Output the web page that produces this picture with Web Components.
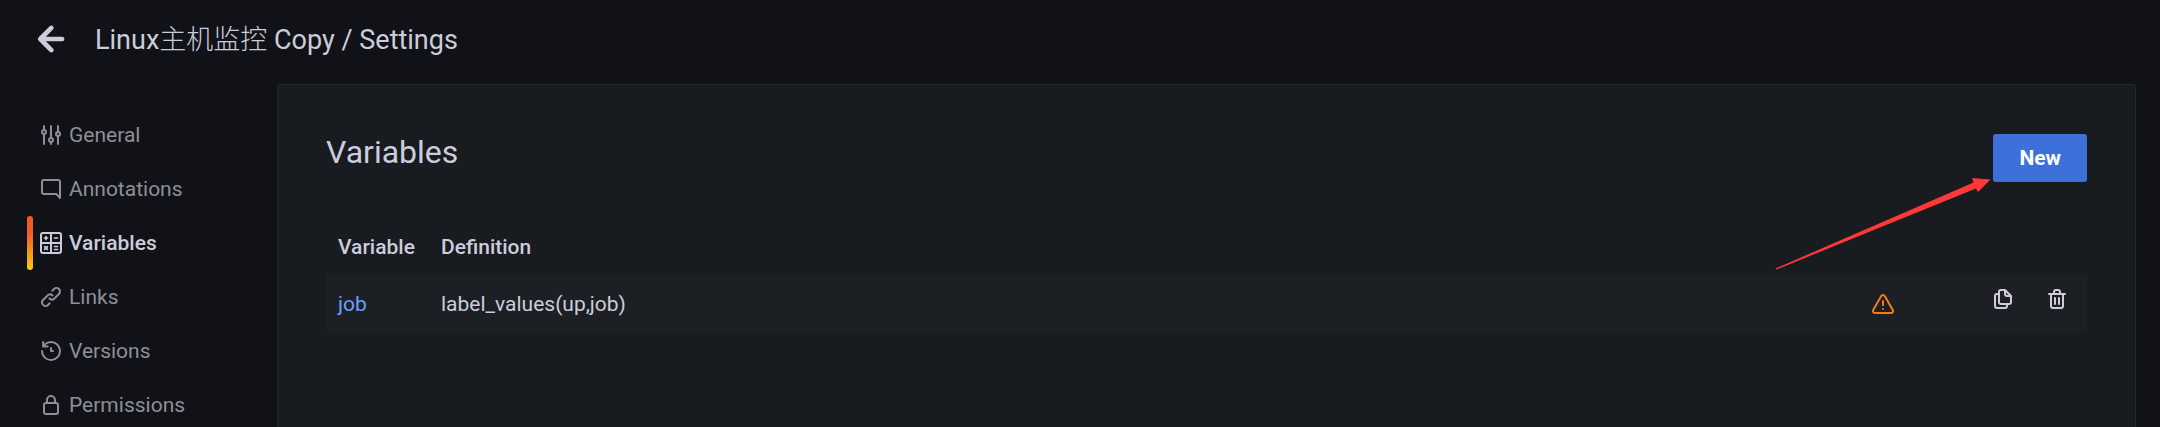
<!DOCTYPE html>
<html lang="en">
<head>
<meta charset="utf-8">
<title>Settings</title>
<style>
  body {
    margin: 0;
    background: #111217;
    color: #ccccdc;
    font-family: Roboto, "Noto Sans CJK SC", sans-serif;
    font-size: 21px;
    line-height: 30px;
  }
</style>
</head>
<body>
<settings-page>
  <page-header slot="header"><span>Linux<span lang="zh" style="font-weight: 300">主机监控</span> Copy / Settings</span></page-header>
  <settings-nav slot="nav">
    <nav-item icon="sliders">General</nav-item>
    <nav-item icon="comment">Annotations</nav-item>
    <nav-item icon="calculator" active>Variables</nav-item>
    <nav-item icon="link">Links</nav-item>
    <nav-item icon="history">Versions</nav-item>
    <nav-item icon="lock">Permissions</nav-item>
  </settings-nav>
  <settings-panel>
    <span slot="title">Variables</span>
    <new-button slot="action">New</new-button>
    <variable-table></variable-table>
    <pointer-arrow slot="pointer"></pointer-arrow>
  </settings-panel>
</settings-page>

<script>
const stroke = 'fill="none" stroke="currentColor" stroke-linecap="round" stroke-linejoin="round"';

const ICONS = {
  back: `<path ${stroke} stroke-width="4" d="M21.500 12H4M12.300 2.500L2.800 12l9.500 9.500"/>`,
  sliders: `<g ${stroke} stroke-width="2"><path d="M5 3v4M5 11v10M12 3v12M12 19v2M19 3v6M19 13v8"/><circle cx="5" cy="9" r="2"/><circle cx="12" cy="17" r="2"/><circle cx="19" cy="11" r="2"/></g>`,
  comment: `<path ${stroke} stroke-width="2" d="M5 3h14a2 2 0 0 1 2 2v16l-2.800-3.200a2 2 0 0 0-1.400-.8H5a2 2 0 0 1-2-2V5a2 2 0 0 1 2-2z"/>`,
  calculator: `<g ${stroke} stroke-width="2"><rect x="2" y="2" width="20" height="20" rx="2"/><path d="M12 2v20M2 12h20"/><path d="M7 5.500v3M5.500 7h3M15.500 7h3M5.600 15.600l2.800 2.800M8.400 15.600l-2.800 2.800M15.500 15.500h3M15.500 18.500h3" stroke-width="1.700"/></g>`,
  link: `<path d="M10,17.55,8.23,19.27a2.47,2.47,0,0,1-3.5-3.5l4.54-4.55a2.46,2.46,0,0,1,3.39-.09l.12.1a1,1,0,0,0,1.4-1.43A2.75,2.75,0,0,0,14,9.59a4.46,4.46,0,0,0-6.09.22L3.31,14.36a4.48,4.48,0,0,0,6.33,6.33L11.37,19A1,1,0,0,0,10,17.55ZM20.69,3.31a4.49,4.49,0,0,0-6.33,0L12.63,5A1,1,0,0,0,14,6.45l1.73-1.72a2.47,2.47,0,0,1,3.5,3.5l-4.54,4.55a2.46,2.46,0,0,1-3.39.09l-.12-.1a1,1,0,0,0-1.4,1.43,2.75,2.75,0,0,0,.23.21,4.47,4.47,0,0,0,6.09-.22l4.55-4.55A4.49,4.49,0,0,0,20.69,3.31Z"/>`,
  history: `<path d="M12,2A10,10,0,0,0,5.12,4.77V3a1,1,0,0,0-2,0V7.5a1,1,0,0,0,1,1H8.62a1,1,0,0,0,0-2H6.22A8,8,0,1,1,4,12a1,1,0,0,0-2,0A10,10,0,1,0,12,2Zm0,6a1,1,0,0,0-1,1v3a1,1,0,0,0,1,1h2a1,1,0,0,0,0-2H13V9A1,1,0,0,0,12,8Z"/>`,
  lock: `<path d="M17,9V7A5,5,0,0,0,7,7V9a3,3,0,0,0-3,3v7a3,3,0,0,0,3,3H17a3,3,0,0,0,3-3V12A3,3,0,0,0,17,9ZM9,7a3,3,0,0,1,6,0V9H9Zm9,12a1,1,0,0,1-1,1H7a1,1,0,0,1-1-1V12a1,1,0,0,1,1-1H17a1,1,0,0,1,1,1Z"/>`,
  warning: `<path d="M12,16a1,1,0,1,0,1,1A1,1,0,0,0,12,16Zm10.67,1.47-8.05-14a3,3,0,0,0-5.24,0l-8,14A3,3,0,0,0,3.94,22H20.06a3,3,0,0,0,2.61-4.53Zm-1.73,2a1,1,0,0,1-.88.51H3.94a1,1,0,0,1-.88-.51,1,1,0,0,1,0-1l8-14a1,1,0,0,1,1.78,0l8.05,14A1,1,0,0,1,20.94,19.49ZM12,8a1,1,0,0,0-1,1v4a1,1,0,0,0,2,0V9A1,1,0,0,0,12,8Z"/>`,
  copy: `<path d="M21,8.94a1.31,1.31,0,0,0-.06-.27l0-.09a1.07,1.07,0,0,0-.19-.28h0l-6-6h0a1.07,1.07,0,0,0-.28-.19.32.32,0,0,0-.09,0A.88.88,0,0,0,14.05,2H10A3,3,0,0,0,7,5V6H6A3,3,0,0,0,3,9V19a3,3,0,0,0,3,3h8a3,3,0,0,0,3-3V18h1a3,3,0,0,0,3-3V9S21,9,21,8.94ZM15,5.41,17.59,8H16a1,1,0,0,1-1-1ZM15,19a1,1,0,0,1-1,1H6a1,1,0,0,1-1-1V9A1,1,0,0,1,6,8H7v7a3,3,0,0,0,3,3h5Zm4-4a1,1,0,0,1-1,1H10a1,1,0,0,1-1-1V5a1,1,0,0,1,1-1h3V7a3,3,0,0,0,3,3h3Z"/>`,
  trash: `<path d="M10,18a1,1,0,0,0,1-1V11a1,1,0,0,0-2,0v6A1,1,0,0,0,10,18ZM20,6H16V5a3,3,0,0,0-3-3H11A3,3,0,0,0,8,5V6H4A1,1,0,0,0,4,8H5V19a3,3,0,0,0,3,3h8a3,3,0,0,0,3-3V8h1a1,1,0,0,0,0-2ZM10,5a1,1,0,0,1,1-1h2a1,1,0,0,1,1,1V6H10Zm7,14a1,1,0,0,1-1,1H8a1,1,0,0,1-1-1V8H17Zm-3-1a1,1,0,0,0,1-1V11a1,1,0,0,0-2,0v6A1,1,0,0,0,14,18Z"/>`
};

class UiIcon extends HTMLElement {
  connectedCallback() {
    this.attachShadow({ mode: 'open' }).innerHTML = `
      <style>
        :host { display: block; flex: none; width: var(--icon-size, 24px); height: var(--icon-size, 24px); }
        svg { display: block; width: 100%; height: 100%; overflow: visible; }
      </style>
      <svg viewBox="0 0 24 24" fill="currentColor" aria-hidden="true">${ICONS[this.getAttribute('name')]}</svg>
    `;
  }
}

class SettingsPage extends HTMLElement {
  connectedCallback() {
    this.attachShadow({ mode: 'open' }).innerHTML = `
      <style>
        :host { display: flex; flex-direction: column; height: 100vh; overflow: hidden; }
        #content { display: flex; flex: 1; min-height: 0; padding-right: 24px; }
      </style>
      <slot name="header"></slot>
      <div id="content">
        <slot name="nav"></slot>
        <slot></slot>
      </div>
    `;
  }
}

class PageHeader extends HTMLElement {
  connectedCallback() {
    this.attachShadow({ mode: 'open' }).innerHTML = `
      <style>
        :host { display: block; }
        header { display: flex; align-items: center; gap: 30px; height: 78px; padding: 0 37px; box-sizing: border-box; }
        button { border: 0; padding: 0; background: none; color: inherit; cursor: pointer; --icon-size: 28px; }
        h1 { margin: 0; padding-top: 2px; font-size: 27px; line-height: 36px; font-weight: 400; }
      </style>
      <header>
        <button type="button" aria-label="Back"><ui-icon name="back"></ui-icon></button>
        <h1><slot></slot></h1>
      </header>
    `;
  }
}

class SettingsNav extends HTMLElement {
  connectedCallback() {
    this.attachShadow({ mode: 'open' }).innerHTML = `
      <style>
        :host { display: block; flex: none; width: 277px; box-sizing: border-box; padding: 30px 24px 0 27px; }
        nav { display: flex; flex-direction: column; }
      </style>
      <nav><slot></slot></nav>
    `;
  }
}

class NavItem extends HTMLElement {
  connectedCallback() {
    this.attachShadow({ mode: 'open' }).innerHTML = `
      <style>
        :host { display: block; }
        a {
          display: flex; align-items: center; gap: 6px; height: 54px; padding-left: 12px;
          position: relative; color: #8e8e99; text-decoration: none;
        }
        :host([active]) a { color: #ccccdc; font-weight: 500; }
        :host([active]) a::before {
          content: ""; position: absolute; left: 0; top: 0; bottom: 0; width: 6px;
          border-radius: 3px; background: linear-gradient(#f05a28 30%, #fbca0a 99%);
        }
      </style>
      <a href="#"><ui-icon name="${this.getAttribute('icon')}"></ui-icon><slot></slot></a>
    `;
  }
}

class SettingsPanel extends HTMLElement {
  connectedCallback() {
    this.attachShadow({ mode: 'open' }).innerHTML = `
      <style>
        :host { display: flex; flex: 1; min-width: 0; padding-top: 6px; }
        main {
          flex: 1; min-width: 0; position: relative; padding: 49px 48px 0;
          background: #181b1f; border: 1px solid #25272c; border-bottom: 0; border-radius: 3px 3px 0 0;
        }
        #top { display: flex; justify-content: space-between; align-items: flex-start; margin-bottom: 36px; }
        h3 { margin: 0; font-size: 32px; line-height: 36px; font-weight: 400; }
        /* lies over the panel, its tip by the button */
        #pointer { position: absolute; top: 94px; right: 144px; }
      </style>
      <main>
        <div id="top">
          <h3><slot name="title"></slot></h3>
          <slot name="action"></slot>
        </div>
        <slot></slot>
        <div id="pointer"><slot name="pointer"></slot></div>
      </main>
    `;
  }
}

class NewButton extends HTMLElement {
  connectedCallback() {
    this.attachShadow({ mode: 'open' }).innerHTML = `
      <style>
        :host { display: block; }
        button {
          display: block; height: 48px; padding: 0 26px; border: 0; border-radius: 3px;
          background: #3d71d9; color: #fff; font: inherit; font-weight: 700; cursor: pointer;
        }
      </style>
      <button type="button"><slot></slot></button>
    `;
  }
}

class VariableTable extends HTMLElement {
  connectedCallback() {
    this.attachShadow({ mode: 'open' }).innerHTML = `
      <style>
        :host { display: block; }
        table { width: 100%; table-layout: fixed; border-collapse: collapse; }
        th, td { height: 57px; padding: 0 12px; text-align: left; box-sizing: border-box; }
        th { font-weight: 500; }
        tbody tr { background: #1c1f23; }
        .name { width: 103px; }
        .status { width: 120px; }
        .tool { width: 54px; }
        td.status { color: #f57c14; }
        td.tool { vertical-align: top; padding-top: 12px; }
        a { color: #6e9fff; text-decoration: none; }
        button { display: block; padding: 0; border: 0; background: none; color: inherit; cursor: pointer; }
      </style>
      <table>
        <thead>
          <tr><th class="name">Variable</th><th>Definition</th><th class="status"></th><th class="tool"></th><th class="tool"></th></tr>
        </thead>
        <tbody>
          <tr>
            <td><a href="#">job</a></td>
            <td>label_values(up,job)</td>
            <td class="status"><ui-icon name="warning"></ui-icon></td>
            <td class="tool"><button type="button" aria-label="Duplicate"><ui-icon name="copy"></ui-icon></button></td>
            <td class="tool"><button type="button" aria-label="Delete"><ui-icon name="trash"></ui-icon></button></td>
          </tr>
        </tbody>
      </table>
    `;
  }
}

class PointerArrow extends HTMLElement {
  connectedCallback() {
    this.attachShadow({ mode: 'open' }).innerHTML = `
      <style>
        :host { display: block; pointer-events: none; }
        svg { display: block; overflow: visible; }
      </style>
      <svg width="216" height="92" viewBox="0 0 216 92" aria-hidden="true">
        <path d="M0.500 89.500L198.500 3.500l-1.500-4.500 18.500 1.500-12.500 12.500-2-3.500L1.500 90.500z" fill="#ff3838"/>
      </svg>
    `;
  }
}

customElements.define('ui-icon', UiIcon);
customElements.define('settings-page', SettingsPage);
customElements.define('page-header', PageHeader);
customElements.define('settings-nav', SettingsNav);
customElements.define('nav-item', NavItem);
customElements.define('settings-panel', SettingsPanel);
customElements.define('new-button', NewButton);
customElements.define('variable-table', VariableTable);
customElements.define('pointer-arrow', PointerArrow);
</script>
</body>
</html>
